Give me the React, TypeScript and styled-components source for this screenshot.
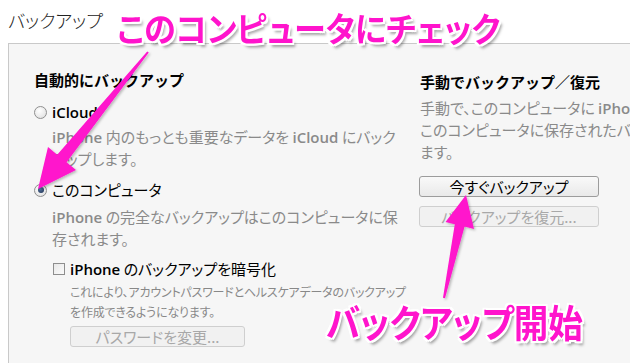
import React from "react";
import styled, { createGlobalStyle } from "styled-components";

const GlobalStyle = createGlobalStyle`
	html, body {
		margin: 0;
		padding: 0;
		background: #fff;
		overflow: hidden;
	}
	body {
		font-family: "Noto Sans CJK JP", "Noto Sans", sans-serif;
	}
`;

const magenta = "#ff14cc";

export default function App() {
	return (
		<Page>
			<GlobalStyle />
			<Title>バックアップ</Title>

			<Panel>
				<Column>
					<Heading>自動的にバックアップ</Heading>

					<OptionRow $gap={12}>
						<Radio />
						<Latin>iCloud</Latin>
					</OptionRow>
					<Description $gap={4}>
						<Latin>iPhone</Latin> 内のもっとも重要なデータを <Latin>iCloud</Latin>{" "}
						にバック
						<br />
						アップします。
					</Description>

					<OptionRow $gap={10}>
						<Radio $checked />
						このコンピュータ
					</OptionRow>
					<Description $gap={6}>
						<Latin>iPhone</Latin> の完全なバックアップはこのコンピュータに保
						<br />
						存されます。
					</Description>

					<CheckRow>
						<Checkbox />
						<span>
							<Latin>iPhone</Latin> のバックアップを暗号化
						</span>
					</CheckRow>
					<SmallNote>
						これにより、アカウントパスワードとヘルスケアデータのバックアップ
						<br />
						を作成できるようになります。
					</SmallNote>
					<Button $width={175} $gap={4} $shift={36} $disabled>
						パスワードを変更...
					</Button>
				</Column>

				<Column>
					<Heading $gap={2}>手動でバックアップ／復元</Heading>
					<Description $gap={5} $indent={0}>
						手動で、このコンピュータに <Latin>iPhone</Latin> をバックアップするか、
						<br />
						このコンピュータに保存されたバックアップを復元し
						<br />
						ます。
					</Description>
					<Button $width={180} $gap={13} $shift={-1}>
						今すぐバックアップ
					</Button>
					<Button $width={180} $gap={9} $shift={-1} $disabled>
						バックアップを復元...
					</Button>
				</Column>
			</Panel>

			<Arrows viewBox="0 0 630 363" width={630} height={363}>
				<defs>
					<filter id="arrowShadow" x="-20%" y="-20%" width="140%" height="140%">
						<feDropShadow dx="1.5" dy="1.5" stdDeviation="1.2" floodColor="#000" floodOpacity="0.25" />
					</filter>
				</defs>
				<polygon
					filter="url(#arrowShadow)"
					fill={magenta}
					points="148.8,52.6 66.6,162.3 76,170 38,189 48,147 57.2,154.7 147.2,51.4"
				/>
				<polygon
					filter="url(#arrowShadow)"
					fill={magenta}
					points="445,298.2 464.6,226.4 474,229 466,195 445.5,222 454.8,224.2 443,297.8"
				/>
			</Arrows>

			<Callout $left={117} $top={8} $size={34} $squeeze={0.945}>
				このコンピュータにチェック
			</Callout>
			<Callout $left={326} $top={298} $size={38} $squeeze={0.91}>
				バックアップ開始
			</Callout>
		</Page>
	);
}

const Page = styled.div`
	position: relative;
	width: 630px;
	height: 363px;
	overflow: hidden;
	color: #111;
`;

const Title = styled.div`
	height: 43px;
	box-sizing: border-box;
	padding: 7px 0 0 8px;
	font-size: 18px;
	line-height: 26px;
	font-weight: 300;
	color: #222;
	font-feature-settings: "palt";
`;

const Panel = styled.div`
	display: grid;
	grid-template-columns: 386px 1fr;
	width: 720px;
	height: 360px;
	margin-left: 8px;
	box-sizing: border-box;
	padding: 26px 0 0 25px;
	background: #f6f6f6;
	border: 1px solid #c9c9c9;
`;

const Column = styled.div`
	display: flex;
	flex-direction: column;
	align-items: flex-start;
`;

const Heading = styled.div<{ $gap?: number }>`
	margin-top: ${({ $gap = 0 }) => $gap}px;
	font-size: 15px;
	line-height: 20px;
	font-weight: 700;
	color: #000;
	white-space: nowrap;
`;

const OptionRow = styled.div<{ $gap: number }>`
	display: flex;
	align-items: center;
	gap: 5px;
	margin-top: ${({ $gap }) => $gap}px;
	font-size: 15px;
	line-height: 20px;
	color: #000;
	white-space: nowrap;
	font-feature-settings: "palt";
`;

const Latin = styled.span`
	font-family: "Open Sans", "Noto Sans", sans-serif;
	font-weight: 600;
`;

const Radio = styled.span<{ $checked?: boolean }>`
	position: relative;
	width: 11px;
	height: 11px;
	border-radius: 50%;
	border: 1px solid #8f8f8f;
	background: radial-gradient(circle at 40% 35%, #ffffff 0%, #e6e6e6 70%, #d0d0d0 100%);
	flex: none;

	&::after {
		content: "";
		display: ${({ $checked }) => ($checked ? "block" : "none")};
		position: absolute;
		left: 2.5px;
		top: 2.5px;
		width: 6px;
		height: 6px;
		border-radius: 50%;
		background: radial-gradient(circle at 40% 35%, #5a7aa8 0%, #263a5c 80%);
	}
`;

const Description = styled.div<{ $gap: number; $indent?: number }>`
	margin-top: ${({ $gap }) => $gap}px;
	padding-left: ${({ $indent = 18 }) => $indent}px;
	font-size: 15px;
	line-height: 22px;
	color: #8a8a8a;
	white-space: nowrap;
	font-feature-settings: "palt";
`;

const CheckRow = styled.div`
	display: flex;
	align-items: center;
	gap: 5px;
	margin-top: 9px;
	padding-left: 19px;
	font-size: 15px;
	line-height: 20px;
	color: #000;
	white-space: nowrap;
	font-feature-settings: "palt";
`;

const Checkbox = styled.span`
	width: 10px;
	height: 10px;
	border: 1px solid #8e8e8e;
	background: linear-gradient(135deg, #e8e8e8, #fbfbfb);
	flex: none;
`;

const SmallNote = styled.div`
	margin-top: 3px;
	padding-left: 36px;
	font-size: 12px;
	letter-spacing: -0.2px;
	line-height: 20px;
	color: #888;
	white-space: nowrap;
	font-feature-settings: "palt";
`;

const Button = styled.div<{ $width: number; $gap: number; $shift?: number; $disabled?: boolean }>`
	width: ${({ $width }) => $width}px;
	height: 21px;
	box-sizing: border-box;
	margin-top: ${({ $gap }) => $gap}px;
	margin-left: ${({ $shift = 0 }) => $shift}px;
	display: flex;
	align-items: center;
	justify-content: center;
	border: 1px solid ${({ $disabled }) => ($disabled ? "#cfcfcf" : "#9c9c9c")};
	border-radius: 3px;
	background: ${({ $disabled }) =>
		$disabled ? "#f1f1f1" : "linear-gradient(#f9f9f9, #e9e9e9)"};
	font-size: 15px;
	line-height: 19px;
	color: ${({ $disabled }) => ($disabled ? "#a8a8a8" : "#000")};
	white-space: nowrap;
	font-feature-settings: "palt";
`;

const Arrows = styled.svg`
	position: absolute;
	left: 0;
	top: 0;
	pointer-events: none;
`;

const Callout = styled.div<{ $left: number; $top: number; $size: number; $squeeze: number }>`
	position: absolute;
	left: ${({ $left }) => $left}px;
	top: ${({ $top }) => $top}px;
	font-size: ${({ $size }) => $size}px;
	line-height: 1.2;
	font-weight: 700;
	color: ${magenta};
	white-space: nowrap;
	font-feature-settings: "palt";
	transform: scaleX(${({ $squeeze }) => $squeeze});
	transform-origin: left center;
	text-shadow:
		-2px -2px 0 #fff, 2px -2px 0 #fff, -2px 2px 0 #fff, 2px 2px 0 #fff,
		0 -2px 0 #fff, 0 2px 0 #fff, -2px 0 0 #fff, 2px 0 0 #fff,
		3px 4px 3px rgba(0, 0, 0, 0.35);
`;
